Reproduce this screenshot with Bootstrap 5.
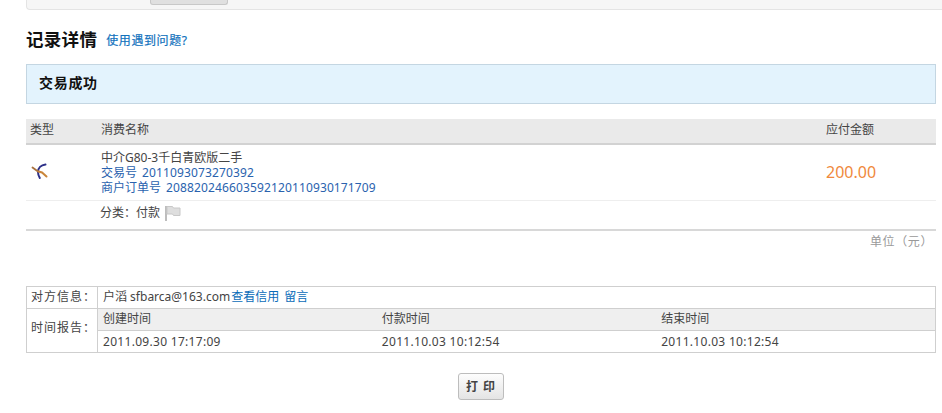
<!doctype html>
<html lang="zh-CN">
<head>
<meta charset="utf-8">
<title>记录详情</title>
<link href="https://cdn.jsdelivr.net/npm/bootstrap@5.3.0/dist/css/bootstrap.min.css" rel="stylesheet">
<style>
html,body{height:413px;overflow:hidden}
body{background:#fff;color:#444;font:12px/15px "Noto Sans","Noto Sans CJK SC",sans-serif}
.page-wrap{padding:0 6px 0 26px}
.top-strip{height:10px;background:#f6f6f6;border:1px solid #e4e4e4;border-top:0;border-right:0;border-radius:0 0 0 4px;margin-right:-6px;padding-left:123px}
.top-tab{display:block;width:78px;height:5px;background:#e0e0e0;border:1px solid #c8c8c8;border-top:0;border-radius:0 0 3px 3px}
.title-row{height:54px;padding-top:18px;gap:9px}
.title-main{font-size:17.5px;font-weight:700;color:#111;margin:0;line-height:22px;letter-spacing:.3px}
.help-link{color:#1272bd;text-decoration:none;padding-top:5px;letter-spacing:.6px;-webkit-text-stroke:.2px #1272bd}
.status-box{height:40px;background:#e3f3fd;border:1px solid #c4d6e2;font-size:14px;font-weight:700;color:#111;padding:0 12px;line-height:36px;letter-spacing:.7px}
.record-table{table-layout:fixed;width:100%;margin:15px 0 0;border-collapse:separate;border-spacing:0}
.record-table th{height:26px;background:#eaeaea;border-bottom:2px solid #d2d2d2;font-weight:400;color:#444;padding:0 0 3px}
.record-table td{padding:0;vertical-align:middle}
.w-type{width:75px;padding-left:4px!important}
.w-amount{width:110px}
.item-row td{height:56px;border-bottom:1px solid #eee}
.sort-row td{height:30px;border-bottom:2px solid #d8d8d8;padding-bottom:3px}
.sort-text{margin-left:-1px}
.order-line{color:#2a62ae}
.order-num{margin-left:5px;letter-spacing:.13px}
.amount-val{color:#f0893c;font-size:16px}
.swallow{display:block;margin:-2px 0 0 5px}
.flag-ico{vertical-align:-5px;margin-left:1px}
.unit-note{color:#999;text-align:right;padding:3px 3px 0 0;height:55px;letter-spacing:.6px}
.info-table{table-layout:fixed;width:100%;border-collapse:collapse;margin:0;border:1px solid #cfcfcf}
.info-table th,.info-table td{border:1px solid #cfcfcf;height:22px;padding:0 5px;font-weight:400;color:#444;white-space:nowrap}
.info-table .side-head{width:71px;text-align:left;letter-spacing:1px;padding:0 0 2px 4px}
.info-table .side-low{padding-bottom:6px}
.info-table .time-col{width:279px}
.info-table .first-row{padding-bottom:2px}
.info-table .time-head{background:#efefef;border-left:0;border-right:0;padding-bottom:2px}
.info-table .time-val{border-left:0;border-right:0}
.info-table .first-cell{border-left:1px solid #cfcfcf}
.info-table .last-cell{border-right:1px solid #cfcfcf}
.info-table a{color:#0a6cb8;text-decoration:none}
.stamp-num{letter-spacing:.3px}
.link-first{margin-left:1px;margin-right:5px}
.print-wrap{padding-top:20px}
.print-btn{width:46px;height:27px;padding:0;border:1px solid #bdbdbd;border-radius:3px;background:linear-gradient(#fdfdfd,#e4e4e4);color:#444;font-size:12px;font-weight:700;line-height:24px;letter-spacing:1px;white-space:pre}
</style>
</head>
<body>
<div class="page-wrap">
  <div class="top-strip"><span class="top-tab"></span></div>
  <div class="title-row d-flex">
    <h1 class="title-main">记录详情</h1>
    <a class="help-link" href="#">使用遇到问题?</a>
  </div>
  <div class="status-box">交易成功</div>

  <table class="record-table">
    <thead>
      <tr>
        <th class="w-type">类型</th>
        <th>消费名称</th>
        <th class="w-amount">应付金额</th>
      </tr>
    </thead>
    <tbody>
      <tr class="item-row">
        <td>
          <svg class="swallow" width="18" height="18" viewBox="0 0 18 18" aria-label="类型图标">
            <path d="M14.500 1.500C10 2 7 5 7 9c0 2.200.6 4 1.800 6" fill="none" stroke="#2c2f88" stroke-width="2" stroke-linecap="round"/>
            <path d="M1.500 4.500 7 8.500" stroke="#a9713d" stroke-width="1.800" stroke-linecap="round"/>
            <path d="M7.500 8.500 11 9.500 15.500 13.500" fill="none" stroke="#c9853a" stroke-width="2" stroke-linecap="round"/>
          </svg>
        </td>
        <td>
          <div>中介G80-3千白青欧版二手</div>
          <div class="order-line">交易号<span class="order-num">2011093073270392</span></div>
          <div class="order-line">商户订单号<span class="order-num">208820246603592120110930171709</span></div>
        </td>
        <td class="amount-val">200.00</td>
      </tr>
      <tr class="sort-row">
        <td></td>
        <td colspan="2"><span class="sort-text">分类：付款</span>
          <svg class="flag-ico" width="17" height="17" viewBox="0 0 17 17" aria-label="旗帜">
            <path d="M2 1v15" stroke="#bdbdbd" stroke-width="2"/>
            <path d="M3 1.500h5.500l1 1.500H16v7.500H9.500l-1-1.500H3z" fill="#dedede" stroke="#c8c8c8"/>
          </svg>
        </td>
      </tr>
    </tbody>
  </table>
  <div class="unit-note">单位（元）</div>

  <table class="info-table">
    <tbody>
      <tr>
        <th class="side-head">对方信息：</th>
        <td class="first-row" colspan="3">户滔 sfbarca@163.com<a class="link-first" href="#">查看信用</a><a href="#">留言</a></td>
      </tr>
      <tr>
        <th class="side-head side-low" rowspan="2">时间报告：</th>
        <td class="time-head time-col first-cell">创建时间</td>
        <td class="time-head time-col">付款时间</td>
        <td class="time-head last-cell">结束时间</td>
      </tr>
      <tr>
        <td class="time-val first-cell stamp-num">2011.09.30 17:17:09</td>
        <td class="time-val stamp-num">2011.10.03 10:12:54</td>
        <td class="time-val last-cell stamp-num">2011.10.03 10:12:54</td>
      </tr>
    </tbody>
  </table>
  <div class="print-wrap text-center"><button type="button" class="btn print-btn">打 印</button></div>
</div>
<script src="https://cdn.jsdelivr.net/npm/bootstrap@5.3.0/dist/js/bootstrap.bundle.min.js"></script>
</body>
</html>
